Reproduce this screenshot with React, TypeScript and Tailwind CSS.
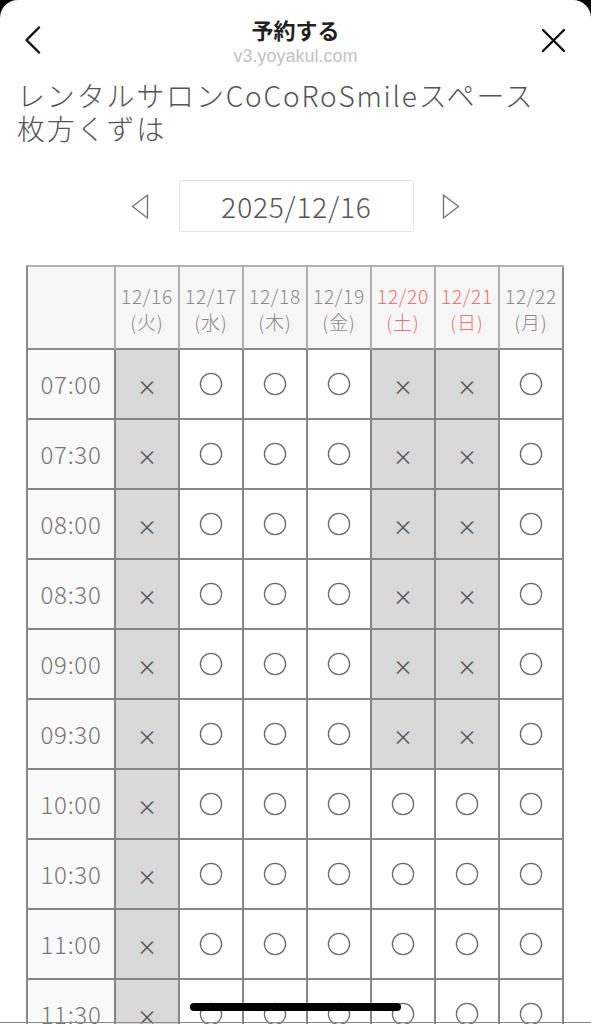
import React from "react";

const days = [
  { d: "12/16", w: "(火)", red: false },
  { d: "12/17", w: "(水)", red: false },
  { d: "12/18", w: "(木)", red: false },
  { d: "12/19", w: "(金)", red: false },
  { d: "12/20", w: "(土)", red: true },
  { d: "12/21", w: "(日)", red: true },
  { d: "12/22", w: "(月)", red: false },
];

const times = ["07:00", "07:30", "08:00", "08:30", "09:00", "09:30", "10:00", "10:30", "11:00", "11:30", "12:00"];

function isClosed(ti: number, di: number) {
  if (di === 0) return true;
  if ((di === 4 || di === 5) && ti < 6) return true;
  return false;
}

function Circle() {
  return (
    <svg width="24" height="24" viewBox="0 0 24 24">
      <circle cx="12" cy="12" r="10.6" fill="none" stroke="#6b6b6b" strokeWidth="1.3" />
    </svg>
  );
}

export default function App() {
  return (
    <div className="relative h-[1024px] w-[591px] overflow-hidden bg-black font-['Noto_Sans_CJK_JP',sans-serif]">
      <div className="h-full rounded-t-[18px] bg-white">
        {/* header */}
        <div className="grid grid-cols-[1fr_auto_1fr]">
          <div className="pl-[24px] pt-[26px]">
            <svg width="17" height="28" viewBox="0 0 17 28">
              <polyline points="15,1.5 2.5,14 15,26.5" fill="none" stroke="#111" strokeWidth="2.4" strokeLinecap="round" strokeLinejoin="round" />
            </svg>
          </div>
          <div className="flex flex-col items-center pt-[15px]">
            <div className="h-[28px] text-[22px] font-bold leading-[28px] text-[#222]">予約する</div>
            <div className="mt-[3px] h-[20px] font-['Liberation_Sans',sans-serif] text-[18px] leading-[20px] text-[#c2c2c2]">
              v3.yoyakul.com
            </div>
          </div>
          <div className="flex justify-end pr-[25px] pt-[28px]">
            <svg width="25" height="25" viewBox="0 0 25 25">
              <line x1="2" y1="2" x2="23" y2="23" stroke="#111" strokeWidth="2.4" strokeLinecap="round" />
              <line x1="23" y1="2" x2="2" y2="23" stroke="#111" strokeWidth="2.4" strokeLinecap="round" />
            </svg>
          </div>
        </div>

        {/* shop name */}
        <div className="mt-[13px] px-[17px] text-[28px] font-light leading-[33px] tracking-[0.065em] text-[#555]">
          <div>レンタルサロンCoCoRoSmileスペース</div>
          <div>枚方くずは</div>
        </div>

        {/* date nav */}
        <div className="mt-[35px] flex items-center justify-center">
          <svg width="18" height="25" viewBox="0 0 18 25">
            <polygon points="16.5,1 1.5,12.5 16.5,24" fill="none" stroke="#777" strokeWidth="1.4" strokeLinejoin="round" />
          </svg>
          <div className="ml-[30px] mr-[28px] flex h-[52px] w-[235px] items-center justify-center rounded-[2px] border border-[#e4e4e4] text-[28px] font-light tracking-[0.03em] text-[#555]">
            2025/12/16
          </div>
          <svg width="18" height="25" viewBox="0 0 18 25">
            <polygon points="1.5,1 16.5,12.5 1.5,24" fill="none" stroke="#777" strokeWidth="1.4" strokeLinejoin="round" />
          </svg>
        </div>

        {/* table */}
        <div className="ml-[26px] mt-[33px] w-[538px] border-l-2 border-t-2 border-l-[#8a8a8a] border-t-[#b4b4b4]">
          <div className="grid grid-cols-[88px_repeat(7,64px)]">
            <div className="h-[83px] border-b-2 border-r-2 border-b-[#8a8a8a] border-r-[#b0b0b0] bg-[#f6f6f6]" />
            {days.map((d, i) => (
              <div
                key={d.d}
                className={`flex h-[83px] flex-col items-center justify-center border-b-2 border-b-[#8a8a8a] bg-[#f6f6f6] pt-[3px] text-[19px] font-light leading-[26px] tracking-[0.04em] ${
                  i === 6 ? "border-r-2 border-r-[#8a8a8a]" : "border-r-2 border-r-[#b0b0b0]"
                } ${d.red ? "text-[#ea7276]" : "text-[#8a8a8a]"}`}
              >
                <span>{d.d}</span>
                <span>{d.w}</span>
              </div>
            ))}
            {times.map((t, ti) => (
              <React.Fragment key={t}>
                <div className="flex h-[70px] items-center justify-center border-b-2 border-r-2 border-[#858585] bg-[#fafafa] text-[24px] font-light tracking-[0.03em] text-[#777]">
                  {t}
                </div>
                {days.map((d, di) =>
                  isClosed(ti, di) ? (
                    <div
                      key={d.d}
                      className="flex h-[70px] items-center justify-center border-b-2 border-r-2 border-[#858585] bg-[#d9d9d9] pt-[6px] text-[20px] text-[#555]"
                    >
                      ×
                    </div>
                  ) : (
                    <div key={d.d} className="flex h-[70px] items-center justify-center border-b-2 border-r-2 border-[#858585] bg-white">
                      <Circle />
                    </div>
                  )
                )}
              </React.Fragment>
            ))}
          </div>
        </div>
      </div>

      {/* home indicator */}
      <div className="absolute left-[190px] top-[1003px] h-[8px] w-[211px] rounded-full bg-black" />
      <div className="absolute left-0 top-[1022px] h-px w-full bg-[#8a8a8a]" />
    </div>
  );
}
